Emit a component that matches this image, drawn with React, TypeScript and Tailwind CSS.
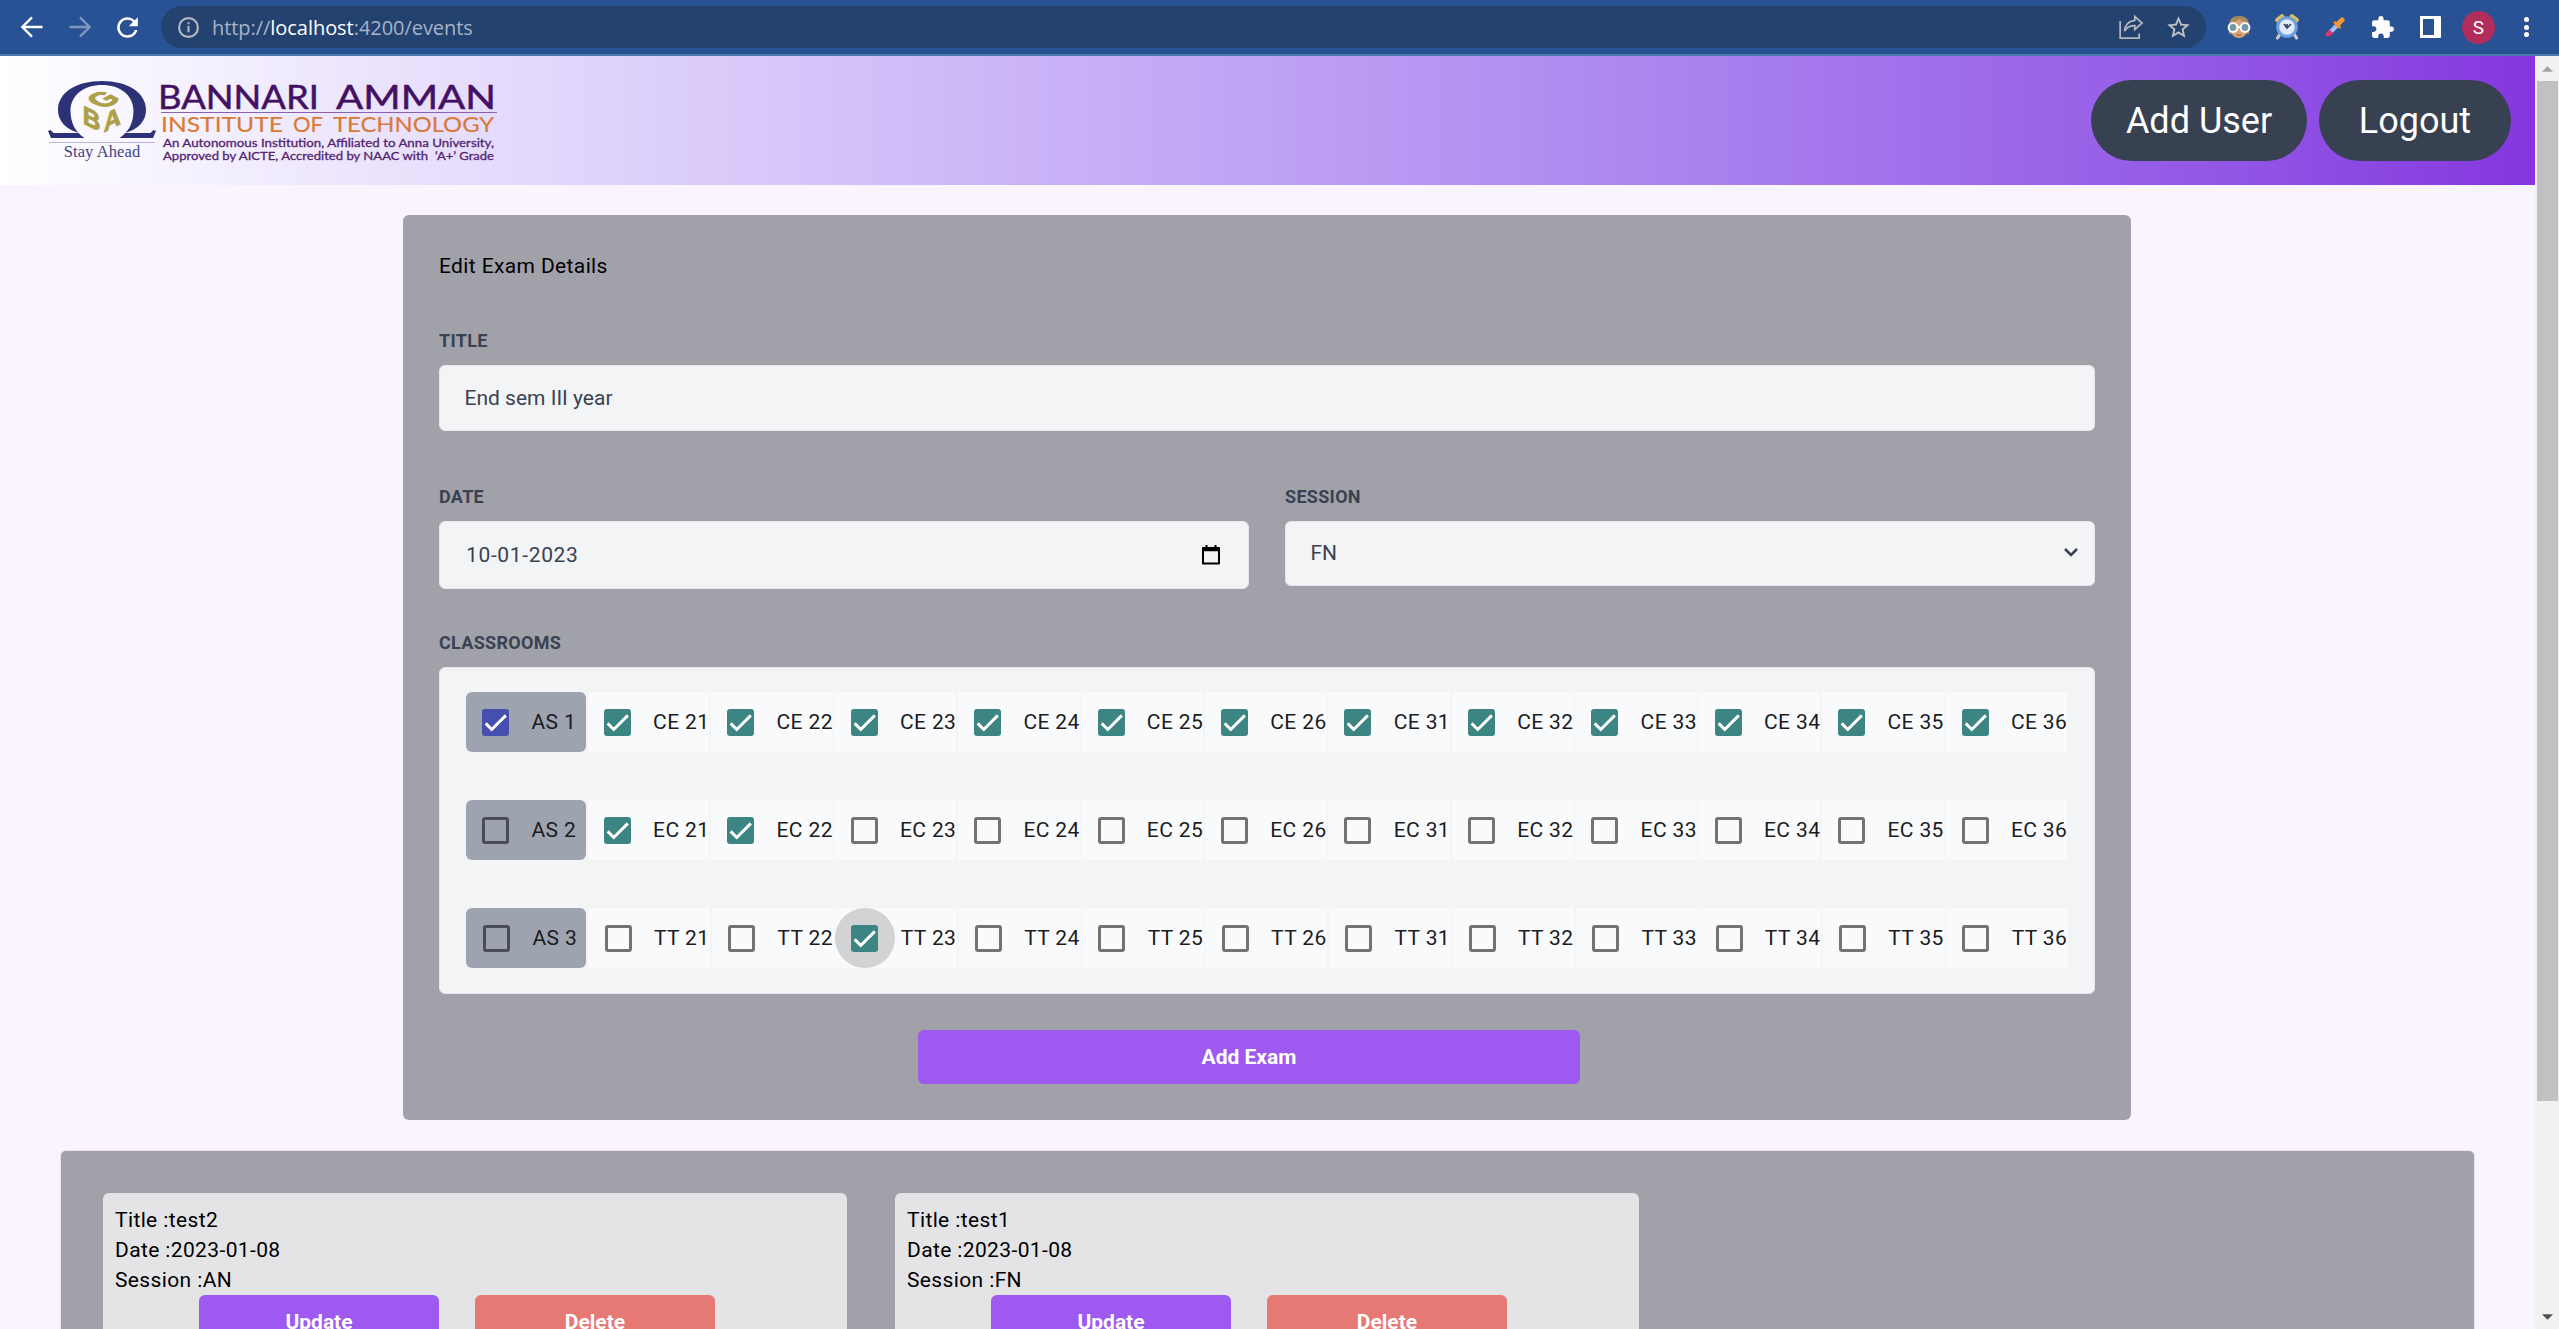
import type { ReactNode } from "react";
import { MdExtension, MdRefresh, MdStarBorder } from "react-icons/md";

const rooms = [21, 22, 23, 24, 25, 26, 31, 32, 33, 34, 35, 36];

const blocks = [
  { name: "AS 1", prefix: "CE", all: true, selected: rooms, focused: 0 },
  { name: "AS 2", prefix: "EC", all: false, selected: [21, 22], focused: 0 },
  { name: "AS 3", prefix: "TT", all: false, selected: [23], focused: 23 },
];

const exams = [
  { title: "test2", date: "2023-01-08", session: "AN" },
  { title: "test1", date: "2023-01-08", session: "FN" },
];

function Check({ on, fill, border }: { on: boolean; fill: string; border: string }) {
  if (!on) return <span className={`size-[27px] shrink-0 rounded-[3px] border-[3px] ${border}`} />;
  return (
    <span className={`relative flex size-[27px] shrink-0 items-center justify-center rounded-[3px] ${fill}`}>
      <svg viewBox="0 0 24 24" className="size-[23px]" fill="none" stroke="#fff" strokeWidth="3.12">
        <path d="M1.73 12.91 8.1 19.28 22.79 4.59" />
      </svg>
    </span>
  );
}

function Label({ children }: { children: ReactNode }) {
  return <div className="h-6 text-[18px] leading-6 font-bold tracking-[0.300px] text-[#3a4252]">{children}</div>;
}

function Emblem() {
  return (
    <svg viewBox="0 0 108 58" className="h-[58px] w-[108px]">
      <path
        fill="#2d3277"
        d="M0 50 2.500 49l3 3H31C17 48 10 39.500 10 29 10 11 29 0 54 0s44 11 44 29c0 10.500-7 19-21 23h25.500l3-3 2.500 1L105 57H71.500c9.500-6 14-16 14-27C85.500 14 72 4 54 4S22.500 14 22.500 30c0 11 4.500 21 14 27H3z"
      />
      <g className="font-['Liberation_Sans'] font-bold tracking-normal" fontSize="24" fill="#aea046" stroke="#aea046" strokeWidth=".9">
        <text transform="matrix(1.040 -.54 1.160 .62 55 28.500)">G</text>
        <text transform="matrix(1.020 .5 0 1.080 34.800 42.300)">B</text>
        <text transform="matrix(.98 -.5 0 1.080 55.800 51.500)">A</text>
      </g>
    </svg>
  );
}

function Logo() {
  return (
    <div className="flex gap-1 pt-px tracking-normal">
      <div className="flex w-[108px] flex-col items-center">
        <Emblem />
        <div className="mt-[3px] h-px w-[106px] bg-[#b9b6da]" />
        <div className="-mt-px font-['Liberation_Serif'] text-[16.500px] leading-[19px] tracking-[0.100px] whitespace-nowrap text-[#41457f]">Stay Ahead</div>
      </div>
      <svg viewBox="0 0 338 84" className="h-[84px] w-[338px] overflow-visible font-['Lato']">
        <g fontSize="33" fill="#431163" stroke="#431163" strokeWidth=".5">
          <text x="-2" y="27.500" textLength="161" lengthAdjust="spacingAndGlyphs">BANNARI</text>
          <text x="176" y="27.500" textLength="160" lengthAdjust="spacingAndGlyphs">AMMAN</text>
        </g>
        <path d="M1 31.500h336" stroke="#8a62b0" strokeWidth="1.200" />
        <g fontSize="21.500" fill="#d97b38" stroke="#d97b38" strokeWidth=".2">
          <text x="1" y="50.500" textLength="122" lengthAdjust="spacingAndGlyphs">INSTITUTE</text>
          <text x="133" y="50.500" textLength="30" lengthAdjust="spacingAndGlyphs">OF</text>
          <text x="173" y="50.500" textLength="161" lengthAdjust="spacingAndGlyphs">TECHNOLOGY</text>
        </g>
        <g fontSize="12" fill="#52246f" stroke="#52246f" strokeWidth=".3">
          <text x="3" y="65.500" textLength="331" lengthAdjust="spacingAndGlyphs">An Autonomous Institution, Affiliated to Anna University,</text>
          <text x="3" y="78.500" textLength="265" lengthAdjust="spacingAndGlyphs">Approved by AICTE, Accredited by NAAC with</text>
          <text x="275" y="78.500" textLength="59" lengthAdjust="spacingAndGlyphs">‘A+’ Grade</text>
        </g>
      </svg>
    </div>
  );
}

function FaceIcon() {
  return (
    <svg viewBox="0 0 24 24" className="size-6">
      <path d="M2 19V10C2 4 6 1 12 1s10 3 10 9v9z" fill="#a98a5c" />
      <path d="M3.500 11c3-4 7-5 9-7 2 3 6 4 8 7v4c-1 5-4.500 8-8.500 8s-7.500-3-8.500-8z" fill="#dda577" />
      <circle cx="6" cy="12.500" r="4.400" fill="#7299a5" stroke="#fff" strokeWidth="2" />
      <circle cx="18" cy="12.500" r="4.400" fill="#7299a5" stroke="#fff" strokeWidth="2" />
      <path d="M10 12h4" stroke="#fff" strokeWidth="2" />
      <path d="M9.500 20h5" stroke="#b25545" strokeWidth="1.300" />
    </svg>
  );
}

function AlarmIcon() {
  return (
    <svg viewBox="0 0 24 26" className="h-[26px] w-6">
      <path d="M5 20 2.500 24M19 20l2.500 4" stroke="#cfcdc8" strokeWidth="3.200" strokeLinecap="round" />
      <path d="M2.500 6 7 2.500M21.500 6 17 2.500" stroke="#dcc05c" strokeWidth="4.600" strokeLinecap="round" />
      <circle cx="12" cy="13" r="9.300" fill="#dfeafa" stroke="#6c9ee0" strokeWidth="3" />
      <path d="M9 10l3 4 4-4M12 14v-4" fill="none" stroke="#34465f" strokeWidth="1.700" />
    </svg>
  );
}

function DropperIcon() {
  return (
    <svg viewBox="0 0 20 20" className="size-5">
      <path d="M3 17.500 11.500 9" stroke="#9cc4f3" strokeWidth="4.400" />
      <path d="M.5 19.500 1.500 15.500l3-3 3.500 3.500-3 3z" fill="#e0336a" />
      <path d="M10 5.500l4.500 4.500" stroke="#ee8b22" strokeWidth="3" strokeLinecap="round" />
      <path d="M12.500 7.500 17 3" stroke="#f29a32" strokeWidth="5" strokeLinecap="round" />
    </svg>
  );
}

function BrowserBar() {
  return (
    <div className="flex h-14 shrink-0 items-center border-b-2 border-[#4d78b0] bg-[#295294] text-white">
      <svg viewBox="0 0 24 24" className="ml-[18px] size-7 shrink-0" fill="none" stroke="#fff" strokeWidth="2">
        <path d="M21 12H4.500M12 3.700 3.700 12l8.300 8.300" />
      </svg>
      <svg viewBox="0 0 24 24" className="ml-5 size-7 shrink-0" fill="none" stroke="#7f97bf" strokeWidth="2">
        <path d="M3 12h16.500M12 3.700l8.300 8.300-8.300 8.300" />
      </svg>
      <MdRefresh className="ml-[18px] size-[31px] shrink-0" />
      <div className="ml-[18px] flex h-[42px] w-[2045px] shrink-0 items-center rounded-full bg-[#24426f] pr-[14px] pl-[16px]">
        <svg viewBox="0 0 24 24" className="size-[23px]" fill="none" stroke="#b5b9bf" strokeWidth="2.200">
          <circle cx="12" cy="12" r="9.800" />
          <path d="M12 10.500v6.500M12 6.500v2.200" />
        </svg>
        <div className="mt-px ml-3 flex-1 font-['Open_Sans'] text-[20px] leading-none tracking-[-0.050px] text-[#a7b3c6]">
          http://<span className="text-white">localhost</span>:4200/events
        </div>
        <svg viewBox="0 0 24 24" className="size-[26px]" fill="none" stroke="#b3b7bd" strokeWidth="1.600">
          <path d="M2 6.500v15.700h17.500V18M15.500 2.300l6.700 6-6.700 6v-3.500c-4 0-7 .9-9.500 5 .4-5 3.500-9.500 9.500-10z" />
        </svg>
        <MdStarBorder className="ml-[21px] size-[27px] text-[#c3c5c8]" />
      </div>
      <div className="ml-[21px] flex items-center">
        <FaceIcon />
        <div className="ml-6"><AlarmIcon /></div>
        <div className="ml-[26px]"><DropperIcon /></div>
        <MdExtension className="ml-[25px] size-[25px]" />
        <div className="ml-[25px] flex h-[22px] w-[21px] rounded-[1px] border-[3px] border-r-0 border-white">
          <div className="ml-auto h-full w-[7px] bg-white" />
        </div>
        <div className="ml-[21px] flex size-[33px] items-center justify-center rounded-full bg-[#b12d5b] text-[19px] leading-none tracking-normal">S</div>
        <div className="ml-[29px] flex flex-col gap-[2.500px]">
          <div className="size-[5px] rounded-full bg-white" />
          <div className="size-[5px] rounded-full bg-white" />
          <div className="size-[5px] rounded-full bg-white" />
        </div>
      </div>
    </div>
  );
}

function Scrollbar() {
  return (
    <div className="flex w-6 shrink-0 flex-col items-center bg-[#f1f1f1]">
      <svg viewBox="0 0 12 6" className="mt-[10px] h-[6px] w-[11px] shrink-0"><path d="M6 0l6 6H0z" fill="#a3a3a3" /></svg>
      <div className="mt-[9px] h-[1020px] w-[21px] shrink-0 bg-[#c1c1c1]" />
      <svg viewBox="0 0 12 6" className="mt-auto mb-[9px] h-[6px] w-[11px] shrink-0"><path d="M6 6l6-6H0z" fill="#505050" /></svg>
    </div>
  );
}

function Header() {
  const pill = "flex h-[81px] items-center justify-center rounded-full bg-[#374152] text-[36px] tracking-normal text-white";
  return (
    <header className="flex h-[129px] shrink-0 items-start justify-between bg-linear-to-r from-white to-[#8536df] pt-6 pr-6 pl-12">
      <Logo />
      <div className="flex gap-3">
        <div className={`${pill} w-[216px]`}>Add User</div>
        <div className={`${pill} w-[192px]`}>Logout</div>
      </div>
    </header>
  );
}

function Classrooms() {
  return (
    <div className="mt-3 flex h-[327px] flex-col gap-12 rounded-md border border-[#e5e7eb] bg-[#f3f4f6] pt-6 pl-[26px] text-[#1c1c1e]">
      {blocks.map((b, row) => (
        <div key={b.name} className="flex h-[60px]">
          <div className={`flex w-[120px] items-center rounded-md bg-[#9da3af] ${row === 2 ? "pl-[17px]" : "pl-4"}`}>
            <Check on={b.all} fill="bg-[#464fb0]" border="border-[#4a4d53]" />
            <span className="ml-[22.500px] whitespace-nowrap">{b.name}</span>
          </div>
          <div className={`flex gap-[1.500px] ${row === 2 ? "ml-[2.300px]" : "ml-[1.500px]"}`}>
            {rooms.map((r) => (
              <div key={r} className="flex w-[121.950px] items-center bg-[#f9fafc] pl-[16.300px]">
                <div className="relative flex">
                  {b.focused === r && <div className="absolute top-1/2 left-1/2 size-[60px] -translate-1/2 rounded-full bg-[#d2d3d5]" />}
                  <Check on={b.selected.includes(r)} fill="bg-[#3c8582]" border="border-[#737374]" />
                </div>
                <span className="ml-[22.300px] whitespace-nowrap">{`${b.prefix} ${r}`}</span>
              </div>
            ))}
          </div>
        </div>
      ))}
    </div>
  );
}

function ExamForm() {
  const field = "mt-3 flex items-center rounded-md border border-[#e5e7eb] bg-[#f3f4f6] text-[#3a4252]";
  return (
    <section className="mx-[403px] mt-[30px] w-[1728px] shrink-0 rounded-md bg-[#a1a1aa] px-9 pt-9 pb-9">
      <div>Edit Exam Details</div>
      <div className="mt-12">
        <Label>TITLE</Label>
        <div className={`${field} h-[66px] px-[24.500px] tracking-normal`}>End sem III year</div>
      </div>
      <div className="mt-[54px] flex h-[105px] items-start gap-9">
        <div className="flex-1">
          <Label>DATE</Label>
          <div className={`${field} h-[68px] justify-between pr-[28.500px] pl-[26px]`}>
            <span className="tracking-[0.650px]">10-01-2023</span>
            <svg viewBox="0 0 18 20" className="h-5 w-[18px]" fill="none" stroke="#000" strokeWidth="2">
              <path d="M1 3h16v15.500H1z" strokeLinejoin="round" />
              <path d="M1 4.500h16" strokeWidth="3.500" />
              <path d="M4.500 0v3M13.500 0v3" />
            </svg>
          </div>
        </div>
        <div className="flex-1">
          <Label>SESSION</Label>
          <div className={`${field} h-[65px] justify-between pr-4 pb-0.5 pl-[24.500px] tracking-normal`}>
            <span>FN</span>
            <svg viewBox="0 0 14 9" className="h-[9px] w-[14px]" fill="none" stroke="#3a4252" strokeWidth="2.600">
              <path d="M1 1l6 6 6-6" />
            </svg>
          </div>
        </div>
      </div>
      <div className="mt-[41px]">
        <Label>CLASSROOMS</Label>
        <Classrooms />
      </div>
      <div className="mt-9 ml-[479px] flex h-[54px] w-[662px] items-center justify-center rounded-md bg-[#9e59f0] font-bold tracking-normal text-white">Add Exam</div>
    </section>
  );
}

function ExamList() {
  const button = "flex h-[54px] w-[240px] items-center justify-center rounded-md font-bold tracking-normal text-white";
  return (
    <section className="mt-[30px] ml-[60px] flex h-[400px] w-[2415px] shrink-0 items-start gap-12 rounded-md border border-[#e5e7eb] bg-[#a1a1aa] pt-[42px] pl-[42px]">
      {exams.map((e) => (
        <div key={e.title} className="h-[240px] w-[744px] rounded-md bg-[#e4e4e7] px-3 pt-3">
          <div>Title :{e.title}</div>
          <div>Date :{e.date}</div>
          <div>Session :{e.session}</div>
          <div className="flex gap-9 pl-[84px]">
            <div className={`${button} bg-[#9e59f0]`}>Update</div>
            <div className={`${button} bg-[#e67973]`}>Delete</div>
          </div>
        </div>
      ))}
    </section>
  );
}

export default function App() {
  return (
    <div className="flex h-[1329px] w-[2559px] flex-col overflow-hidden bg-[#faf4ff] font-['Roboto',sans-serif] text-[21px] leading-[30px] tracking-[0.375px] text-black">
      <BrowserBar />
      <div className="flex min-h-0 flex-1">
        <main className="flex min-w-0 flex-1 flex-col overflow-hidden">
          <Header />
          <ExamForm />
          <ExamList />
        </main>
        <Scrollbar />
      </div>
    </div>
  );
}
